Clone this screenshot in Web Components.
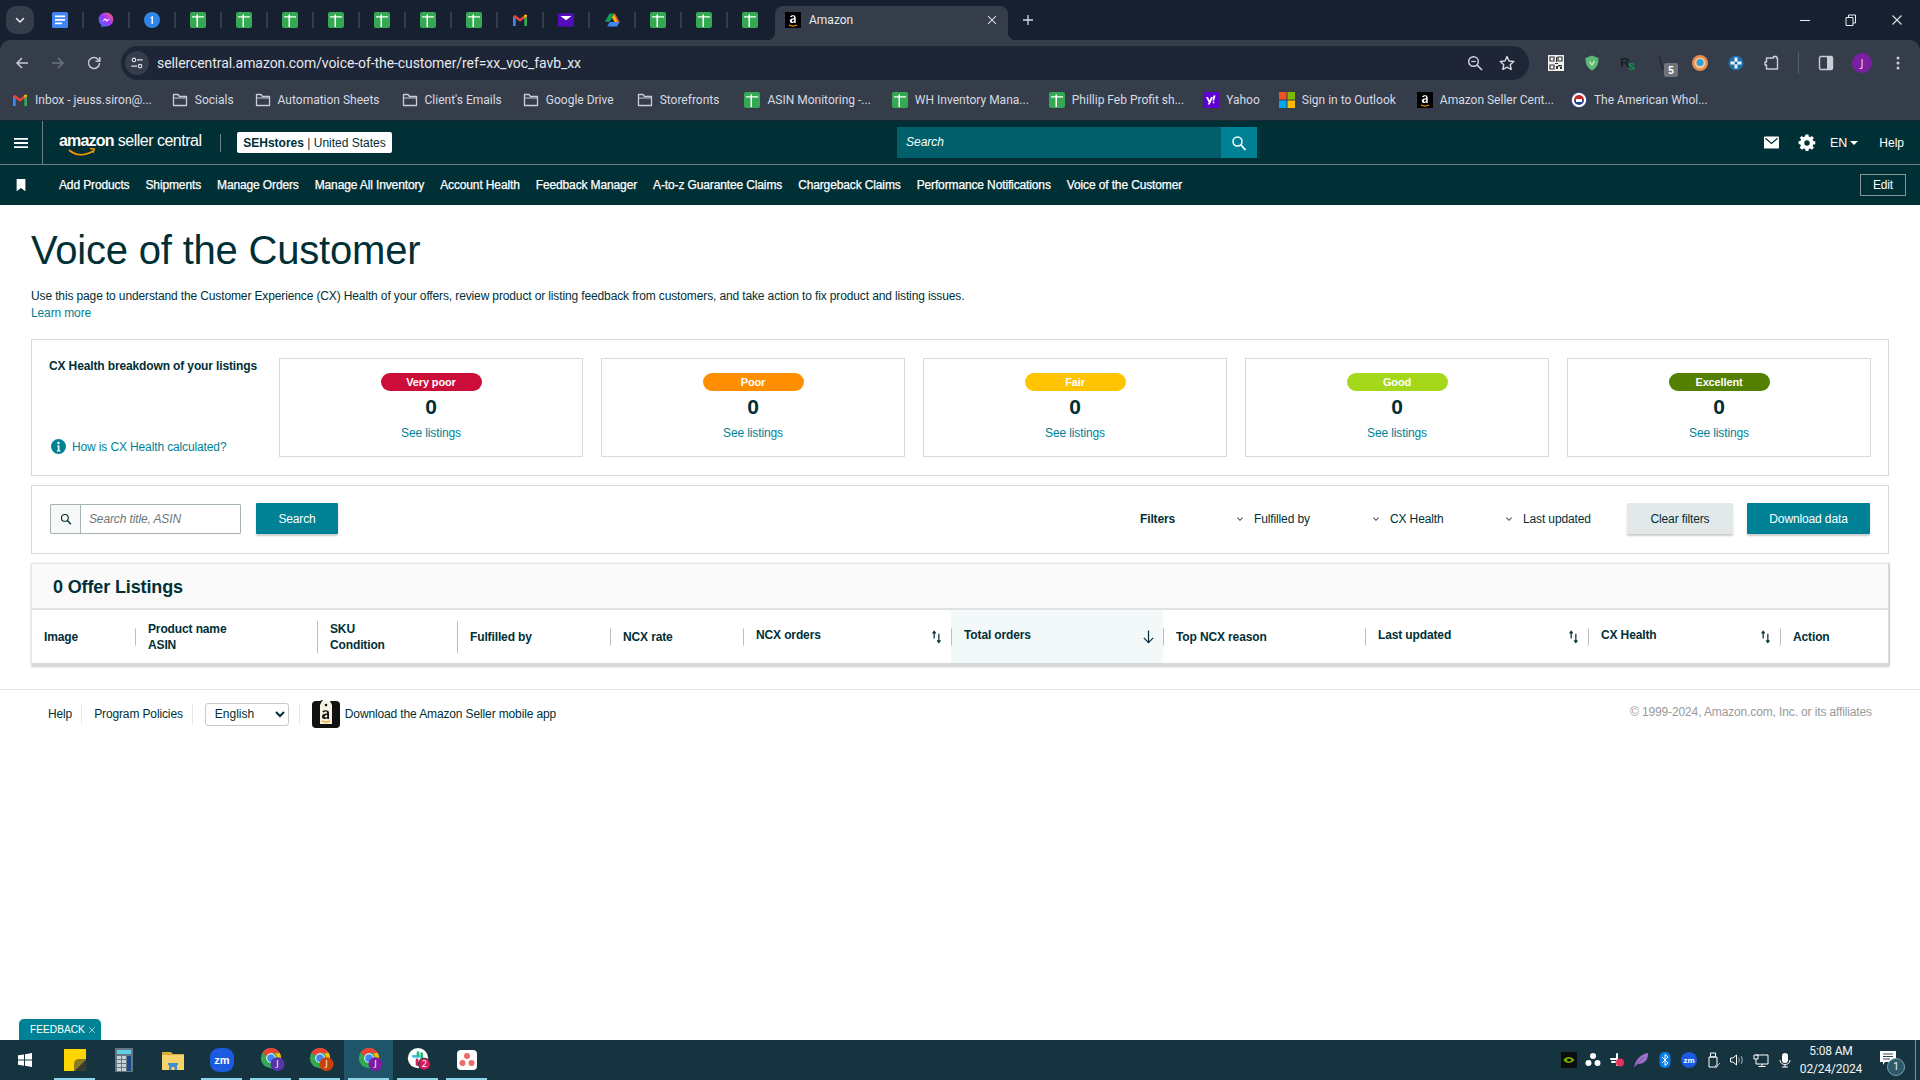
<!DOCTYPE html>
<html lang="en"><head><meta charset="utf-8"><title>Voice of the Customer</title>
<style>
html,body{margin:0;padding:0;background:linear-gradient(#172031 0 60px,#fff 60px)}
body{width:1920px;height:1080px;overflow:hidden;display:flex;flex-direction:column;position:relative;font:12px "Liberation Sans",Arial,sans-serif;color:#002f36}
</style></head><body>
<chrome-tabs></chrome-tabs>
<chrome-toolbar></chrome-toolbar>
<chrome-bookmarks>
<book-mark icon="gmail">Inbox - jeuss.siron@...</book-mark>
<book-mark icon="folder" style="margin-left:-1px">Socials</book-mark>
<book-mark icon="folder">Automation Sheets</book-mark>
<book-mark icon="folder" style="margin-left:1px">Client's Emails</book-mark>
<book-mark icon="folder">Google Drive</book-mark>
<book-mark icon="folder" style="margin-left:2px">Storefronts</book-mark>
<book-mark icon="sheets" style="margin-left:4px">ASIN Monitoring -...</book-mark>
<book-mark icon="sheets">WH Inventory Mana...</book-mark>
<book-mark icon="sheets" style="margin-left:-1px">Phillip Feb Profit sh...</book-mark>
<book-mark icon="yahoo" style="margin-left:-2px">Yahoo</book-mark>
<book-mark icon="ms" style="margin-left:-2px">Sign in to Outlook</book-mark>
<book-mark icon="amazon">Amazon Seller Cent...</book-mark>
<book-mark icon="wholesale" style="margin-left:-4px">The American Whol...</book-mark>
</chrome-bookmarks>
<sc-header></sc-header>
<sc-nav>
<a>Add Products</a><a>Shipments</a><a>Manage Orders</a><a>Manage All Inventory</a><a>Account Health</a><a>Feedback Manager</a><a>A-to-z Guarantee Claims</a><a>Chargeback Claims</a><a>Performance Notifications</a><a>Voice of the Customer</a>
</sc-nav>
<voc-page>
<page-intro></page-intro>
<health-panel>
<health-card color="#cc0c39" label="Very poor"></health-card>
<health-card color="#ff8f00" label="Poor"></health-card>
<health-card color="#ffc400" label="Fair"></health-card>
<health-card color="#a5d71a" label="Good"></health-card>
<health-card color="#538000" label="Excellent"></health-card>
</health-panel>
<filter-bar></filter-bar>
<listing-table>
<head-cell w="103" style="padding-left:12px">Image</head-cell>
<head-cell w="182" sep="short"><div>Product name</div><div>ASIN</div></head-cell>
<head-cell w="140" sep="tall"><div>SKU</div><div>Condition</div></head-cell>
<head-cell w="153" sep="tall">Fulfilled by</head-cell>
<head-cell w="133" sep="short">NCX rate</head-cell>
<head-cell w="208" sep="short" sort="both">NCX orders</head-cell>
<head-cell w="212" sep="short" sort="down" active>Total orders</head-cell>
<head-cell w="202" sep="short">Top NCX reason</head-cell>
<head-cell w="223" sep="short" sort="both">Last updated</head-cell>
<head-cell w="192" sep="short" sort="both">CX Health</head-cell>
<head-cell w="108" sep="short">Action</head-cell>
</listing-table>
</voc-page>
<site-footer></site-footer>
<feedback-tab></feedback-tab>
<win-taskbar></win-taskbar>
<script>
const sq=(inner,vb=16)=>`<svg xmlns="http://www.w3.org/2000/svg" viewBox="0 0 ${vb} ${vb}" width="100%" height="100%" style="display:block;overflow:visible">${inner}</svg>`;
const chromeLogo=(c)=>`<circle cx="11" cy="11" r="11" fill="#34a853"/><path d="M11 0a11 11 0 0 1 9.5 5.5H11a5.5 5.5 0 0 0-4.8 2.8L1.5 5.2A11 11 0 0 1 11 0z" fill="#ea4335"/><path d="M20.5 5.5A11 11 0 0 1 11 22l4.8-8.2A5.5 5.5 0 0 0 15.6 6z" fill="#fbbc04"/><circle cx="11" cy="11" r="5.2" fill="#fff"/><circle cx="11" cy="11" r="4.1" fill="#4285f4"/><circle cx="18" cy="17.5" r="7.6" fill="${c}"/><text x="18" y="21" font-size="10" text-anchor="middle" fill="#fff" font-family="Noto Sans">J</text>`;
const ICONS={
sheets:sq('<rect width="16" height="16" rx="2" fill="#34a853"/><path d="M2 4.200h12v1.400H2zM6.500 2.500H8V15H6.500z" fill="#fff"/>'),
docs:sq('<rect width="16" height="16" rx="1.6" fill="#4285f4"/><path d="M3 3.6h10v1.7H3zM3 7h10v1.7H3zM3 10.6h7v1.7H3z" fill="#fff"/>'),
messenger:sq('<defs><linearGradient id="mg" x1="0" y1="1" x2="1" y2="0"><stop offset="0" stop-color="#2f7dff"/><stop offset=".5" stop-color="#a033ff"/><stop offset="1" stop-color="#ff6968"/></linearGradient></defs><path d="M8 .5c4.2 0 7.3 3 7.3 7s-3.100 7-7.300 7c-.8 0-1.500-.1-2.200-.3L3.500 15.500v-2.400C1.800 11.800.7 9.800.7 7.500c0-4 3.100-7 7.300-7z" fill="url(#mg)"/><path d="M3.800 9.800 7 6.300l2 1.700 3.200-1.700-3.200 3.500-2-1.700z" fill="#fff"/>'),
onepass:sq('<circle cx="8" cy="8" r="8" fill="#2f86e8"/><path d="M6.600 5.200 8.900 4v8H7.500V6.200l-.9.4z" fill="#fff"/>'),
gmail:sq('<path d="M1 14V4.200l2.700 2V14z" fill="#4285f4"/><path d="M15 14V4.200l-2.700 2V14z" fill="#34a853"/><path d="M1 4.500 3 2.800 8 6.700l5-3.900 2 1.700-7 5.300z" fill="#ea4335"/><path d="M12.300 6.200 15 4.200V3l-2-.4-.7.500z" fill="#fbbc04"/>'),
proton:sq('<rect y="1.500" width="16" height="13" rx="1" fill="#5a0fc8"/><rect y="1.500" width="16" height="13" rx="1" fill="#4a0bb0" opacity=".5"/><path d="M2.500 4h11L8 8.200z" fill="#fff"/>'),
drive:sq('<path d="M5.500 1.500h5L5.800 9.800H.8z" fill="#0f9d58"/><path d="M10.500 1.500 15.500 10l-2.600 4-5-8.600z" fill="#f4b400"/><path d="M15.500 10 12.900 14.500H3.200l2.500-4.500z" fill="#4285f4"/><path d="M10 1.500h.7L15.500 10h-2z" fill="#ea4335"/>'),
amazon:sq('<rect width="16" height="16" fill="#000"/><path d="M4 13c2.500 1.300 5.500 1.300 8 0" stroke="#f90" stroke-width="1.200" fill="none"/><path d="M5 4.800c.6-1.900 5.500-2.400 5.700.6v5.600H9.300l-.2-.8c-1.300 1.300-4.300 1.200-4.300-1.100 0-2.200 2.500-2.700 4.300-2.800V5.400C9 3.900 7 4.200 6.700 5.300zm4.100 2.800c-1.100 0-2.400.5-2.300 1.400.1 1 1.700.8 2.300.1z" fill="#fff"/>'),
folder:sq('<path d="M1.500 13.500v-11h4.500l1.500 2h7v9z" fill="none" stroke="#c9ced6" stroke-width="1.300" stroke-linejoin="round"/><path d="M1.500 6h13" stroke="#c9ced6" stroke-width="1"/>'),
yahoo:sq('<rect width="16" height="16" fill="#5f01d1"/><path d="M3 5h2l1.500 3.500L8 5h2L6.800 12.500H4.700l1-2.100zM10.500 3.500h2l-1.300 5h-1.700zM9.800 9.500h1.500v1.700H9.800z" fill="#fff"/>'),
ms:sq('<rect width="7.500" height="7.500" fill="#f25022"/><rect x="8.500" width="7.500" height="7.500" fill="#7fba00"/><rect y="8.500" width="7.500" height="7.500" fill="#00a4ef"/><rect x="8.500" y="8.500" width="7.500" height="7.500" fill="#ffb900"/>'),
wholesale:sq('<circle cx="8" cy="8" r="7.600" fill="#fff" stroke="#233a7a" stroke-width=".8"/><path d="M3 8a5 5 0 0 1 10 0z" fill="#c62828"/><path d="M3 8a5 5 0 0 0 10 0z" fill="#1f3f8f"/><path d="M5 7h6v3H5z" fill="#fff"/>'),
chev:sq('<path d="M4.500 6.500 8 10l3.500-3.500" fill="none" stroke="#e4e8ee" stroke-width="1.600" stroke-linecap="round" stroke-linejoin="round"/>'),
x:sq('<path d="M3.500 3.500l9 9M12.500 3.500l-9 9" stroke="#d8dce3" stroke-width="1.200"/>'),
plus:sq('<path d="M8 3v10M3 8h10" stroke="#d8dce3" stroke-width="1.300"/>'),
min:sq('<path d="M3 8.500h10" stroke="#e8ebf0" stroke-width="1"/>'),
restore:sq('<path d="M3 5.500h7v8H3zM5.500 5.500V3h7v8H10" fill="none" stroke="#e8ebf0" stroke-width="1"/>'),
back:sq('<path d="M14 8H3M8 3 3 8l5 5" fill="none" stroke="#c5cad3" stroke-width="1.500"/>'),
fwd:sq('<path d="M2 8h11M8 3l5 5-5 5" fill="none" stroke="#6c7380" stroke-width="1.500"/>'),
reload:sq('<path d="M13.500 8a5.500 5.500 0 1 1-1.600-3.900L13.500 6" fill="none" stroke="#c5cad3" stroke-width="1.500"/><path d="M13.800 2v4.300H9.500" fill="none" stroke="#c5cad3" stroke-width="1.500"/>'),
tune:sq('<circle cx="4.500" cy="4.500" r="2" fill="none" stroke="#dfe3ea" stroke-width="1.300"/><path d="M8 4.500h6.500M1.500 11.500H8" stroke="#dfe3ea" stroke-width="1.500"/><circle cx="11.500" cy="11.500" r="2" fill="none" stroke="#dfe3ea" stroke-width="1.300"/>'),
zoom:sq('<circle cx="6.500" cy="6.500" r="4.800" fill="none" stroke="#d5d9e0" stroke-width="1.400"/><path d="M10 10l5 5" stroke="#d5d9e0" stroke-width="1.600"/><path d="M4.300 6.500h4.400" stroke="#d5d9e0" stroke-width="1.200"/>'),
star:sq('<path d="M8 1.500l2 4.500 4.800.5-3.600 3.200 1 4.800L8 12.200l-4.200 2.300 1-4.800L1.200 6.500 6 6z" fill="none" stroke="#d5d9e0" stroke-width="1.400" stroke-linejoin="round"/>'),
qr:sq('<rect width="16" height="16" fill="#f2f2f2"/><path d="M2 2h4v4H2zM10 2h4v4h-4zM2 10h4v4H2z" fill="none" stroke="#333" stroke-width="1.200"/><path d="M8 2h1v5H8zM7 8h3v1H7zM10 10h4v1.500h-4zM8 11h2v3H8zM12 12h2v2h-2z" fill="#333"/>'),
shield:sq('<path d="M8 .5 14.500 3c0 6-1.500 10-6.500 12.500C3 13 1.500 9 1.500 3z" fill="#5bb974"/><path d="M5.500 6.500 8 10l2.500-4" fill="none" stroke="#d8f0de" stroke-width="1.200"/>'),
rs:sq('<text x="0" y="12" font-size="13" font-weight="700" font-family="Liberation Sans" fill="#1a1f26">R</text><text x="8" y="15" font-size="13" font-weight="700" font-family="Liberation Sans" fill="#0f8f46">s</text>'),
sbadge:sq('<path d="M3 0l4 15" stroke="#1a1f26" stroke-width=".9"/><rect x="8" y="8" width="14" height="14" rx="2" fill="#6f7378"/><text x="15" y="19" font-size="10" font-weight="700" text-anchor="middle" font-family="Liberation Sans" fill="#fff">5</text>'),
orange:sq('<circle cx="8" cy="8" r="8" fill="#e98c4a"/><circle cx="8" cy="8" r="5.500" fill="#f5c79c"/><circle cx="8" cy="7.500" r="3.500" fill="#2f9fd8"/>'),
bluex:sq('<circle cx="8" cy="8" r="7.500" fill="#1d6ea8"/><path d="M6.500 2.500h3v4h4v3h-4v4h-3v-4h-4v-3h4z" fill="#e8f4fb"/><circle cx="8" cy="8" r="1.500" fill="#1d6ea8"/>'),
puzzle:sq('<path d="M2.500 3h7V1.500h3V3h1v11h-11v-4H1V7h1.500z" fill="none" stroke="#c9ced6" stroke-width="1.400" stroke-linejoin="round"/>'),
panel:sq('<rect x="1.500" y="1.500" width="13" height="13" rx="1.500" fill="none" stroke="#c9ced6" stroke-width="1.400"/><rect x="9" y="2" width="5.500" height="12" fill="#c9ced6"/>'),
avatar:sq('<circle cx="10" cy="10" r="10" fill="#7b1fa2"/><text x="10" y="14" font-size="11" text-anchor="middle" font-family="Noto Sans" fill="#e9d6f2">J</text>',20),
dots:sq('<circle cx="8" cy="3" r="1.500" fill="#c9ced6"/><circle cx="8" cy="8" r="1.500" fill="#c9ced6"/><circle cx="8" cy="13" r="1.500" fill="#c9ced6"/>'),
burger:sq('<path d="M1 3h14v1.800H1zM1 7.100h14v1.800H1zM1 11.200h14V13H1z" fill="#fff"/>'),
smile:sq('<path d="M1 2c7 6 16 6 24 1" fill="none" stroke="#f90" stroke-width="1.700"/><path d="M22 .5l4.500.5-1.500 4" fill="none" stroke="#f90" stroke-width="1.300"/>',28),
search:sq('<circle cx="6.500" cy="6.500" r="4.500" fill="none" stroke="currentColor" stroke-width="1.500"/><path d="M10 10l4.500 5" stroke="currentColor" stroke-width="1.800"/>'),
mail:sq('<rect y="1.500" width="16" height="13" rx="1" fill="#fff"/><path d="M1.500 3.500 8 9l6.500-5.500" fill="none" stroke="#002f36" stroke-width="1.300"/>'),
gear:sq('<path d="M6.500 0h3l.4 2.200 1.400.6 1.900-1.300 2.100 2.100-1.300 1.900.6 1.400 2.200.4v3l-2.200.4-.6 1.400 1.300 1.900-2.100 2.100-1.900-1.300-1.400.6-.4 2.200h-3l-.4-2.200-1.400-.6-1.900 1.300L.2 14l1.300-1.900-.6-1.400L-1 10.100v-3l2.200-.4.6-1.400L.2 3.600l2.100-2.100 1.900 1.300 1.400-.6z" transform="translate(.5 -.5) scale(.94)" fill="#fff"/><circle cx="8" cy="8" r="2.700" fill="#002f36"/>'),
bookmark:sq('<path d="M3 1h10v14l-5-3.500L3 15z" fill="#fff"/>'),
info:sq('<circle cx="8" cy="8" r="8" fill="#008296"/><circle cx="8" cy="4.300" r="1.300" fill="#fff"/><path d="M6.500 6.800h2.500v5.200h1v1.200H6.300V12h1V8H6.500z" fill="#fff"/>'),
chevd:sq('<path d="M5 6.500 8 9.500l3-3" fill="none" stroke="#44595d" stroke-width="1.300"/>'),
sortboth:sq('<path d="M5.500 10V2.500M3.800 4.800l1.700-2.300 1.700 2.300" fill="none" stroke="#002f36" stroke-width="1.300"/><path d="M10.500 5v9.500M8.800 12.200l1.700 2.300 1.700-2.300" fill="none" stroke="#002f36" stroke-width="1.300"/>'),
sortdown:sq('<path d="M8 1.500v13M3 9.500l5 5 5-5" fill="none" stroke="#002f36" stroke-width="1.300"/>'),
seller:sq('<path d="M4 3 10 0l4 3v24H4a3 3 0 0 1-3-3V6a3 3 0 0 1 3-3z" fill="#111"/><rect x="0" y="1" width="28" height="27" rx="4" fill="#111"/><path d="M10 1h8l2 4v19H8V5z" fill="#f5f1e3"/><circle cx="14" cy="5" r="1.300" fill="#111"/><path d="M10.200 12c.7-2.200 6.600-2.700 6.800.7v6.300h-1.700l-.2-1c-1.600 1.500-5.100 1.300-5.100-1.300s3-3.100 5.100-3.200v-.8c-.4-1.700-2.600-1.300-3.100-.1zm5 3.100c-1.300 0-2.900.6-2.700 1.600.2 1.100 2 .9 2.700.1z" fill="#111"/><path d="M10 21c2.500 1.300 5.500 1.300 8 0" stroke="#f90" stroke-width="1.200" fill="none"/>',28),
win:sq('<path d="M1 3.300 7 2.400v5.200H1zM8 2.300 15 1v6.600H8zM1 8.500h6v5.200l-6-.9zM8 8.500h7V15l-7-1.200z" fill="#fff"/>'),
sticky:sq('<rect width="22" height="22" fill="#ffd600"/><path d="M22 10v12H10z" fill="#3d3a30"/><path d="M10 22l12-12h-7a5 5 0 0 0-5 5z" fill="#8a7a20"/>',22),
calc:sq('<g transform="translate(3 0)"><rect width="18" height="24" rx="1" fill="#657884"/><rect x="2" y="2" width="14" height="4" fill="#5fd0e8"/><path d="M2 8h4v3H2zM7 8h4v3H7zM2 12h4v3H2zM7 12h4v3H7zM2 16h4v3H2zM7 16h4v3H7zM2 20h4v3H2zM7 20h4v3H7z" fill="#c5d2d8"/><rect x="12" y="8" width="4" height="15" fill="#174a86"/></g>',24),
explorer:sq('<path d="M0 3h9l2 2h11v16H0z" fill="#d9a93a"/><rect y="6" width="22" height="15" fill="#f6d36b"/><path d="M7 21v-6h8v6h-2.500v-3h-3v3z" fill="#3f8fd0"/><rect x="6" y="14" width="10" height="2" fill="#3f8fd0"/>',22),
zm:sq('<rect width="24" height="24" rx="9" fill="#1a5be0"/><text x="12" y="16" font-size="11" font-weight="700" text-anchor="middle" font-family="Liberation Sans" fill="#fff">zm</text>',24),
chrome1:sq('<g transform="translate(2 0)">'+chromeLogo('#5533a8')+'</g>',26),
chrome2:sq('<g transform="translate(2 0)">'+chromeLogo('#c8400c')+'</g>',26),
chrome3:sq('<g transform="translate(2 0)">'+chromeLogo('#7b1fa2')+'</g>',26),
slack:sq('<g transform="translate(2 0)"><circle cx="11" cy="11" r="11" fill="#fff"/><path d="M6 9h6" stroke="#36c5f0" stroke-width="3" stroke-linecap="round"/><path d="M11 5v3" stroke="#2eb67d" stroke-width="3" stroke-linecap="round"/><path d="M15 6v6" stroke="#2eb67d" stroke-width="3" stroke-linecap="round"/><path d="M10 13v5" stroke="#e01e5a" stroke-width="3" stroke-linecap="round"/><path d="M13 14h4" stroke="#ecb22e" stroke-width="3" stroke-linecap="round"/><circle cx="18" cy="17.500" r="6.500" fill="#d41a5c" stroke="#16333f"/><text x="18" y="21" font-size="10" text-anchor="middle" font-family="Noto Sans" fill="#fff">2</text></g>',26),
asana:sq('<rect width="20" height="20" rx="4" fill="#fff"/><circle cx="10" cy="6" r="3" fill="#f06a6a"/><circle cx="5.500" cy="13" r="3" fill="#f06a6a"/><circle cx="14.500" cy="13" r="3" fill="#f06a6a"/>',20),
nvidia:sq('<rect width="16" height="16" fill="#0d0d0d"/><path d="M2.500 8C5 4 10 4 13.500 8 10 12 5 12 2.500 8z" fill="#76b900"/><path d="M5.500 8C7 6 9 6 10.500 8 9 10 7 10 5.500 8z" fill="#0d0d0d"/>'),
trayasana:sq('<circle cx="8" cy="4" r="3" fill="#fff"/><circle cx="3.500" cy="11" r="3" fill="#fff"/><circle cx="12.500" cy="11" r="3" fill="#fff"/>'),
trayslack:sq('<path d="M2 7h5M8 2v5M8 8v5M3 10h3" stroke="#fff" stroke-width="2" stroke-linecap="round"/><circle cx="11" cy="10.500" r="4" fill="#e8305f"/>'),
feather:sq('<path d="M1 15C3 7 8 2 15 1c.5 6-3 11-10 11z" fill="#9a6fc9"/><path d="M1 15 11 5" stroke="#6d4a9c" stroke-width=".8"/>'),
bt:sq('<rect x="2.500" width="11" height="16" rx="5" fill="#0a7ce8"/><path d="M5 5l6 6-3 2.500v-11L11 5l-6 6" fill="none" stroke="#fff" stroke-width="1"/>'),
trayzm:sq('<circle cx="8" cy="8" r="8" fill="#1a5be0"/><text x="8" y="11" font-size="8" font-weight="700" text-anchor="middle" font-family="Liberation Sans" fill="#fff">zm</text>'),
usb:sq('<path d="M4 5h8v10H4zM5.500 1h5v4h-5z" fill="none" stroke="#fff" stroke-width="1"/><path d="M10 13l1.500 1.500L15 11" fill="none" stroke="#bcd" stroke-width=".9"/>'),
vol:sq('<path d="M1.500 6v4h2.500l3.500 3V3L4 6z" fill="none" stroke="#fff" stroke-width="1"/><path d="M9.500 5.500c1 1.500 1 3.500 0 5M12 4c1.700 2.500 1.700 5.500 0 8" fill="none" stroke="#9fb0b6" stroke-width="1"/>'),
net:sq('<path d="M1 3h4v4H1zM3 3h12v9H3v-5" fill="none" stroke="#fff" stroke-width="1"/><path d="M9 12v2M5.500 14.500h7" stroke="#fff" stroke-width="1"/>'),
mic:sq('<rect x="5" y="1" width="6" height="10" rx="3" fill="#fff"/><path d="M3 8c0 6 10 6 10 0M8 13v2M5 15h6" fill="none" stroke="#fff" stroke-width="1"/>'),
note:sq('<path d="M0 1h16v11H5l-2 3v-3H0z" fill="#fff"/><path d="M3 4h10M3 6.500h10M3 9h7" stroke="#16333f" stroke-width=".9"/>')
};
function def(name,html,init){customElements.define(name,class extends HTMLElement{
 constructor(){super();this.attachShadow({mode:'open'}).innerHTML=typeof html==='function'?html(this):html;}
 connectedCallback(){if(init&&!this._i){this._i=1;init(this);}}
});}
const ic=(n,s,style='')=>`<x-icon name="${n}" size="${s}" style="${style}"></x-icon>`;
customElements.define('x-icon',class extends HTMLElement{
 constructor(){super();this.attachShadow({mode:'open'});}
 connectedCallback(){const s=this.getAttribute('size')||16;this.shadowRoot.innerHTML=`<style>:host{display:inline-block;flex:none;width:${s}px;height:${s}px;line-height:0}</style>${ICONS[this.getAttribute('name')]}`;}
});
const tabIcons=['docs','messenger','onepass','sheets','sheets','sheets','sheets','sheets','sheets','sheets','gmail','proton','drive','sheets','sheets','sheets'];
def('chrome-tabs',`<style>
:host{display:flex;align-items:center;height:40px;background:#172031;padding-left:6px;box-sizing:border-box;font:12px Roboto,sans-serif;color:#e6e9ee}
.col{width:28px;height:28px;background:#353d4b;border-radius:10px;display:flex;align-items:center;justify-content:center;margin-right:3px}
.t{width:46px;height:40px;display:flex;align-items:center;justify-content:center;box-sizing:border-box;position:relative}
.t+.t::before{content:"";position:absolute;left:-1px;top:12px;height:16px;width:2px;background:#353d4b}
.active{margin:6px 0 0 2px;width:233px;height:34px;background:#353d4b;border-radius:8px 8px 0 0;display:flex;align-items:center;padding:0 9px 6px 10px;box-sizing:border-box;gap:8px;position:relative}
.active span{flex:1}
.active::before,.active::after{content:"";position:absolute;bottom:0;width:8px;height:8px}
.active::before{left:-8px;background:radial-gradient(circle at 0 0,transparent 8px,#353d4b 8.500px)}
.active::after{right:-8px;background:radial-gradient(circle at 100% 0,transparent 8px,#353d4b 8.500px)}
.plus{margin-left:12px;display:flex}.ctl{margin-left:auto;display:flex}.ctl div{width:46px;height:40px;display:flex;align-items:center;justify-content:center}
</style><div class="col">${ic('chev',16)}</div>${tabIcons.map(i=>`<div class="t">${ic(i,16)}</div>`).join('')}
<div class="active">${ic('amazon',16)}<span>Amazon</span>${ic('x',14)}</div><div class="plus">${ic('plus',16)}</div>
<div class="ctl"><div>${ic('min',16)}</div><div>${ic('restore',16)}</div><div>${ic('x',16)}</div></div>`);
const extC=(n,s,e='')=>`<div class="c" style="${e}">${ic(n,s)}</div>`;
def('chrome-toolbar',`<style>
:host{display:flex;align-items:flex-end;height:40px;padding:0 0 0 4px;box-sizing:content-box;padding-bottom:6px;background:#353d4b;font:14px Roboto,sans-serif;color:#e6e9ee;border-radius:10px 10px 0 0}
.c{width:36px;height:34px;display:flex;align-items:center;justify-content:center;flex:none}
.addr{margin:0 9px;width:1408px;height:34px;border-radius:17px;background:#1d2536;display:flex;align-items:center;box-sizing:border-box;padding:0 6px 0 4px;flex:none}
.tune{width:24px;height:24px;border-radius:50%;background:#353d4b;display:flex;align-items:center;justify-content:center;margin-right:8px}
.url{flex:1;letter-spacing:-.08px}
.sep{width:1px;height:22px;background:#59606d;margin:0 9px 6px 8px}
.row{display:flex;align-items:center}
.addr .c{width:32px}
</style><div class="row">${extC('back',16)}${extC('fwd',16)}${extC('reload',16)}</div>
<div class="addr"><div class="tune">${ic('tune',14)}</div><span class="url">sellercentral.amazon.com/voice-of-the-customer/ref=xx_voc_favb_xx</span>${extC('zoom',16)}${extC('star',16)}</div>
<div class="row">${extC('qr',16)}${extC('shield',16)}${extC('rs',16)}${extC('sbadge',16)}${extC('orange',16)}${extC('bluex',16)}${extC('puzzle',16)}</div><div class="sep"></div><div class="row">${extC('panel',16)}${extC('avatar',20)}${extC('dots',16)}</div>`);
def('chrome-bookmarks',`<style>:host{display:flex;align-items:center;height:34px;background:#353d4b;padding:0 0 6px 12px;gap:21px;box-sizing:border-box;font:12px Roboto,sans-serif;color:#d7dbe2;white-space:nowrap}</style><slot></slot>`);
def('book-mark',b=>`<style>:host{display:inline-flex;align-items:center;gap:7px}</style>${ic(b.getAttribute('icon'),16)}<span><slot></slot></span>`);
def('sc-header',`<style>
:host{display:flex;align-items:center;height:45px;box-sizing:border-box;background:#002f36;border-top:1px solid #1a2730;border-bottom:1px solid #6c8084;color:#fff;position:relative}
.burger{width:42px;height:100%;display:flex;align-items:center;justify-content:center;border-right:1px solid #6c8084;box-sizing:content-box;flex:none}
.logo{margin-left:16px;position:relative;font-size:16px;line-height:20px;white-space:nowrap;width:161px;margin-top:-4px;letter-spacing:-.5px}
.logo b{font-weight:700;font-size:16px;letter-spacing:-.8px}
.logo x-icon{position:absolute;left:9px;top:17px;display:block}
.sep{width:1px;height:18px;background:#6c8084;flex:none}
.store{margin-left:16px;height:21px;width:155px;background:#fff;color:#002f36;border-radius:2px;display:flex;align-items:center;justify-content:center;font-size:12px;white-space:nowrap;flex:none}
.store b{font-weight:700}
.search{margin-left:505px;width:360px;height:31px;background:#005f6b;display:flex;flex:none}
.search i{flex:1;font-size:12px;line-height:31px;padding-left:9px}
.search div{width:36px;background:#008296;display:flex;align-items:center;justify-content:center;color:#fff}
.r{margin-left:auto;display:flex;align-items:center;font-size:12px;padding-right:16px}
.en{display:flex;align-items:center;gap:3px;margin-left:15px;font-size:12.500px}
.en::after{content:"";border:4px solid transparent;border-top-color:#fff;border-bottom:0}
.help{margin-left:21px}
</style><div class="burger">${ic('burger',16)}</div><div class="logo"><b>amazon</b> seller central${ic('smile',28)}</div><div class="sep"></div>
<div class="store"><b>SEHstores</b>&nbsp;|&nbsp;United States</div>
<div class="search"><i>Search</i><div>${ic('search',16)}</div></div>
<div class="r">${ic('mail',15)}<span style="width:20px"></span>${ic('gear',16)}<div class="en">EN</div><div class="help">Help</div></div>`);
def('sc-nav',`<style>
:host{display:flex;align-items:center;height:40px;box-sizing:border-box;background:#002f36;color:#fff;font-size:12px;padding-left:14px;white-space:nowrap;-webkit-text-stroke:.25px #fff;letter-spacing:-.13px}
.links{display:flex;gap:16px;margin-left:31px}
::slotted(a){color:#fff}
.edit{margin-left:auto;margin-right:14px;width:46px;height:22px;border:1px solid #879596;box-sizing:border-box;display:flex;align-items:center;justify-content:center;-webkit-text-stroke:0}
</style>${ic('bookmark',14)}<div class="links"><slot></slot></div><div class="edit">Edit</div>`);
def('voc-page',`<style>:host{display:flex;flex-direction:column;padding:0 31px;box-sizing:border-box;flex:none;letter-spacing:-.13px}</style><slot></slot>`);
def('page-intro',`<style>
:host{display:block;height:134px;color:#002f36}
h1{margin:0;padding-top:22px;font:400 40px/46px "Liberation Sans",Arial,sans-serif;color:#002f36;letter-spacing:-.2px}
p{margin:15px 0 0;font-size:12px;line-height:17px}
a{color:#008296}
</style><h1>Voice of the Customer</h1><p>Use this page to understand the Customer Experience (CX) Health of your offers, review product or listing feedback from customers, and take action to fix product and listing issues.<br><a>Learn more</a></p>`);
def('health-panel',`<style>
:host{display:flex;height:137px;box-sizing:border-box;border:1px solid #d5dbdb;padding:18px 17px 18px 18px;justify-content:space-between}
.lead{width:229px;flex:none;display:flex;flex-direction:column;justify-content:space-between;padding:1px 0 2px;box-sizing:border-box}
b{font-size:12px;line-height:14px;margin:0 0 0 -1px}
.how{color:#008296;display:flex;align-items:center;gap:6px;padding:0 0 1px 1px}
.cards{display:flex;gap:18px}
</style><div class="lead"><b>CX Health breakdown of your listings</b><div class="how">${ic('info',15)}How is CX Health calculated?</div></div><div class="cards"><slot></slot></div>`);
def('health-card',c=>`<style>
:host{display:flex;flex-direction:column;align-items:center;width:304px;box-sizing:border-box;border:1px solid #d5dbdb;padding-top:14px}
.pill{width:101px;height:18px;border-radius:9px;background:${c.getAttribute('color')};color:#fff;font-weight:700;font-size:11px;line-height:18px;text-align:center}
.n{font-size:21px;font-weight:700;line-height:24px;margin-top:4px}
a{color:#008296;margin-top:7px;line-height:14px}
</style><div class="pill">${c.getAttribute('label')}</div><div class="n">0</div><a>See listings</a>`);
def('filter-bar',`<style>
:host{display:flex;align-items:center;height:69px;box-sizing:border-box;border:1px solid #d5dbdb;margin-top:9px;padding:0 18px 2px}
.g{width:191px;height:30px;box-sizing:border-box;border:1px solid #a6b3b5;display:flex;flex:none;border-radius:1px}
.g div{width:29px;border-right:1px solid #a6b3b5;background:#f7f8f8;display:flex;align-items:center;justify-content:center;color:#002f36;flex:none}
.g i{color:#6c7778;padding-left:8px;line-height:28px;font-size:12px}
button{font:inherit;letter-spacing:inherit;border:0;height:31px;border-radius:1px;box-shadow:0 2px 2px rgba(0,0,0,.2);padding:0}
.p{background:#008296;color:#fff;font-weight:400}
.s{margin-left:15px;width:82px}
.fl{margin-left:auto;display:flex;align-items:center}
.f{display:flex;align-items:center;box-sizing:border-box}
.f x-icon{margin:0 7px 0 -7px}
.t{font-weight:700;width:100px}
.cl{background:#e3e9e9;color:#002f36;width:106px}
.dl{width:123px;margin-left:14px}
</style><div class="g"><div>${ic('search',12)}</div><i>Search title, ASIN</i></div><button class="p s">Search</button>
<div class="fl"><div class="f t">Filters</div><div class="f" style="width:136px">${ic('chevd',14)}Fulfilled by</div><div class="f" style="width:133px">${ic('chevd',14)}CX Health</div><div class="f" style="width:118px">${ic('chevd',14)}Last updated</div><button class="cl">Clear filters</button><button class="p dl">Download data</button></div>`);
def('listing-table',`<style>
:host{display:block;margin-top:9px;border:1px solid #e3e6e6;border-bottom:0;box-sizing:border-box;box-shadow:0 1px 2px rgba(0,0,0,.2),1px 0 1px rgba(0,0,0,.12);border-right:1px solid #d5dbdb}
.h{height:44px;background:#fafafa;border-bottom:2px solid #dfe2e2;box-sizing:content-box;font:700 18px/46px "Liberation Sans",Arial,sans-serif;padding-left:21px}
.r{display:flex;height:53px;border-bottom:3px solid #d5dbdb;background:#fff}
</style><div class="h">0 Offer Listings</div><div class="r"><slot></slot></div>`);
def('head-cell',c=>{const s=c.getAttribute('sep'),so=c.getAttribute('sort');return `<style>
:host{display:flex;align-items:center;width:${c.getAttribute('w')}px;flex:none;box-sizing:border-box;position:relative;padding-left:13px;font-weight:700;line-height:16px;${c.hasAttribute('active')?'background:#f3f8f8;':''}}
.sep{position:absolute;left:0;top:50%;width:1px;background:#b6c1c2;height:${s==='tall'?32:s==='short'?17:0}px;transform:translateY(-50%)}
.txt{${so?'margin-top:-4px':''}}
x-icon{position:absolute;right:7px;top:calc(50% - 8px)}
</style><div class="sep"></div><div class="txt"><slot></slot></div>${so?ic(so==='down'?'sortdown':'sortboth',15):''}`;});
def('site-footer',`<style>
:host{display:flex;align-items:center;margin-top:23px;border-top:1px solid #e7e7e7;height:49px;box-sizing:border-box;padding:0 48px;position:relative;letter-spacing:-.13px}
.s{width:1px;height:20px;background:#e7e7e7;margin:0 12px 0 9px}
.s2{margin:0 12px 0 9px}
.s3{margin:0 12px 0 10px}
select{font:12px "Liberation Sans",Arial,sans-serif;color:#002f36;width:84px;height:23px;background:#fff;border:1px solid #c5cbcb;border-radius:3px;padding-left:5px}
.d{display:flex;align-items:center;gap:5px}
.c{margin-left:auto;color:#999;margin-top:-5px}
</style><span>Help</span><div class="s"></div><span>Program Policies</span><div class="s s2"></div><select><option>English</option></select><div class="s s3"></div><div class="d">${ic('seller',28)}Download the Amazon Seller mobile app</div><div class="c">© 1999-2024, Amazon.com, Inc. or its affiliates</div>`);
def('feedback-tab',`<style>
:host{position:absolute;left:19px;top:1019px;width:82px;height:21px;background:#008296;border-radius:5px 5px 0 0;color:#fff;font:10.200px "Liberation Sans",Arial,sans-serif;display:flex;align-items:center;gap:2px;padding-left:11px;box-sizing:border-box;box-shadow:0 0 1px #9db}
</style>FEEDBACK ${ic('x',10)}`);
const tb=(n,s,u,e='')=>`<div class="b ${u?'u':''} ${e}">${ic(n,s)}</div>`;
def('win-taskbar',`<style>
:host{position:absolute;left:0;right:0;top:1040px;height:40px;background:#16343f;display:flex;align-items:stretch;font:12px Roboto,sans-serif;color:#f0f4f5}
.b{width:49px;display:flex;align-items:center;justify-content:center;position:relative;flex:none}
.u::after{content:"";position:absolute;left:4px;right:4px;bottom:0;height:2px;background:#8ed3e8}
.act{background:#1f5568}
.st{width:50px}
.tray{margin-left:auto;display:flex;align-items:center}
.tray div.c{width:24px;display:flex;justify-content:center}
.clock{width:68px;text-align:center;line-height:18px;white-space:nowrap;letter-spacing:-.15px}
.note{position:relative;width:46px;height:40px;margin-right:4px;display:flex;justify-content:center;padding-top:10px;box-sizing:border-box}
.note span{position:absolute;left:22px;top:18px;width:16px;height:16px;border-radius:50%;background:#2d5a6b;border:1px solid #7da2ad;text-align:center;line-height:16px;font-size:10px}
.edge{width:1px;background:#7c929a;margin-right:4px}
</style><div class="b st">${ic('win',16)}</div>${tb('sticky',22,1)}${tb('calc',24,0)}${tb('explorer',22,0)}${tb('zm',24,1)}${tb('chrome1',24,1)}${tb('chrome2',24,1)}${tb('chrome3',24,1,'act')}${tb('slack',24,1)}${tb('asana',20,1)}
<div class="tray">${['nvidia','trayasana','trayslack','feather','bt','trayzm','usb','vol','net','mic'].map(i=>`<div class="c">${ic(i,16)}</div>`).join('')}<div class="clock">5:08 AM<br>02/24/2024</div><div class="note">${ic('note',16)}<span>1</span></div><div class="edge" style="height:40px"></div></div>`);
</script>
</body></html>
